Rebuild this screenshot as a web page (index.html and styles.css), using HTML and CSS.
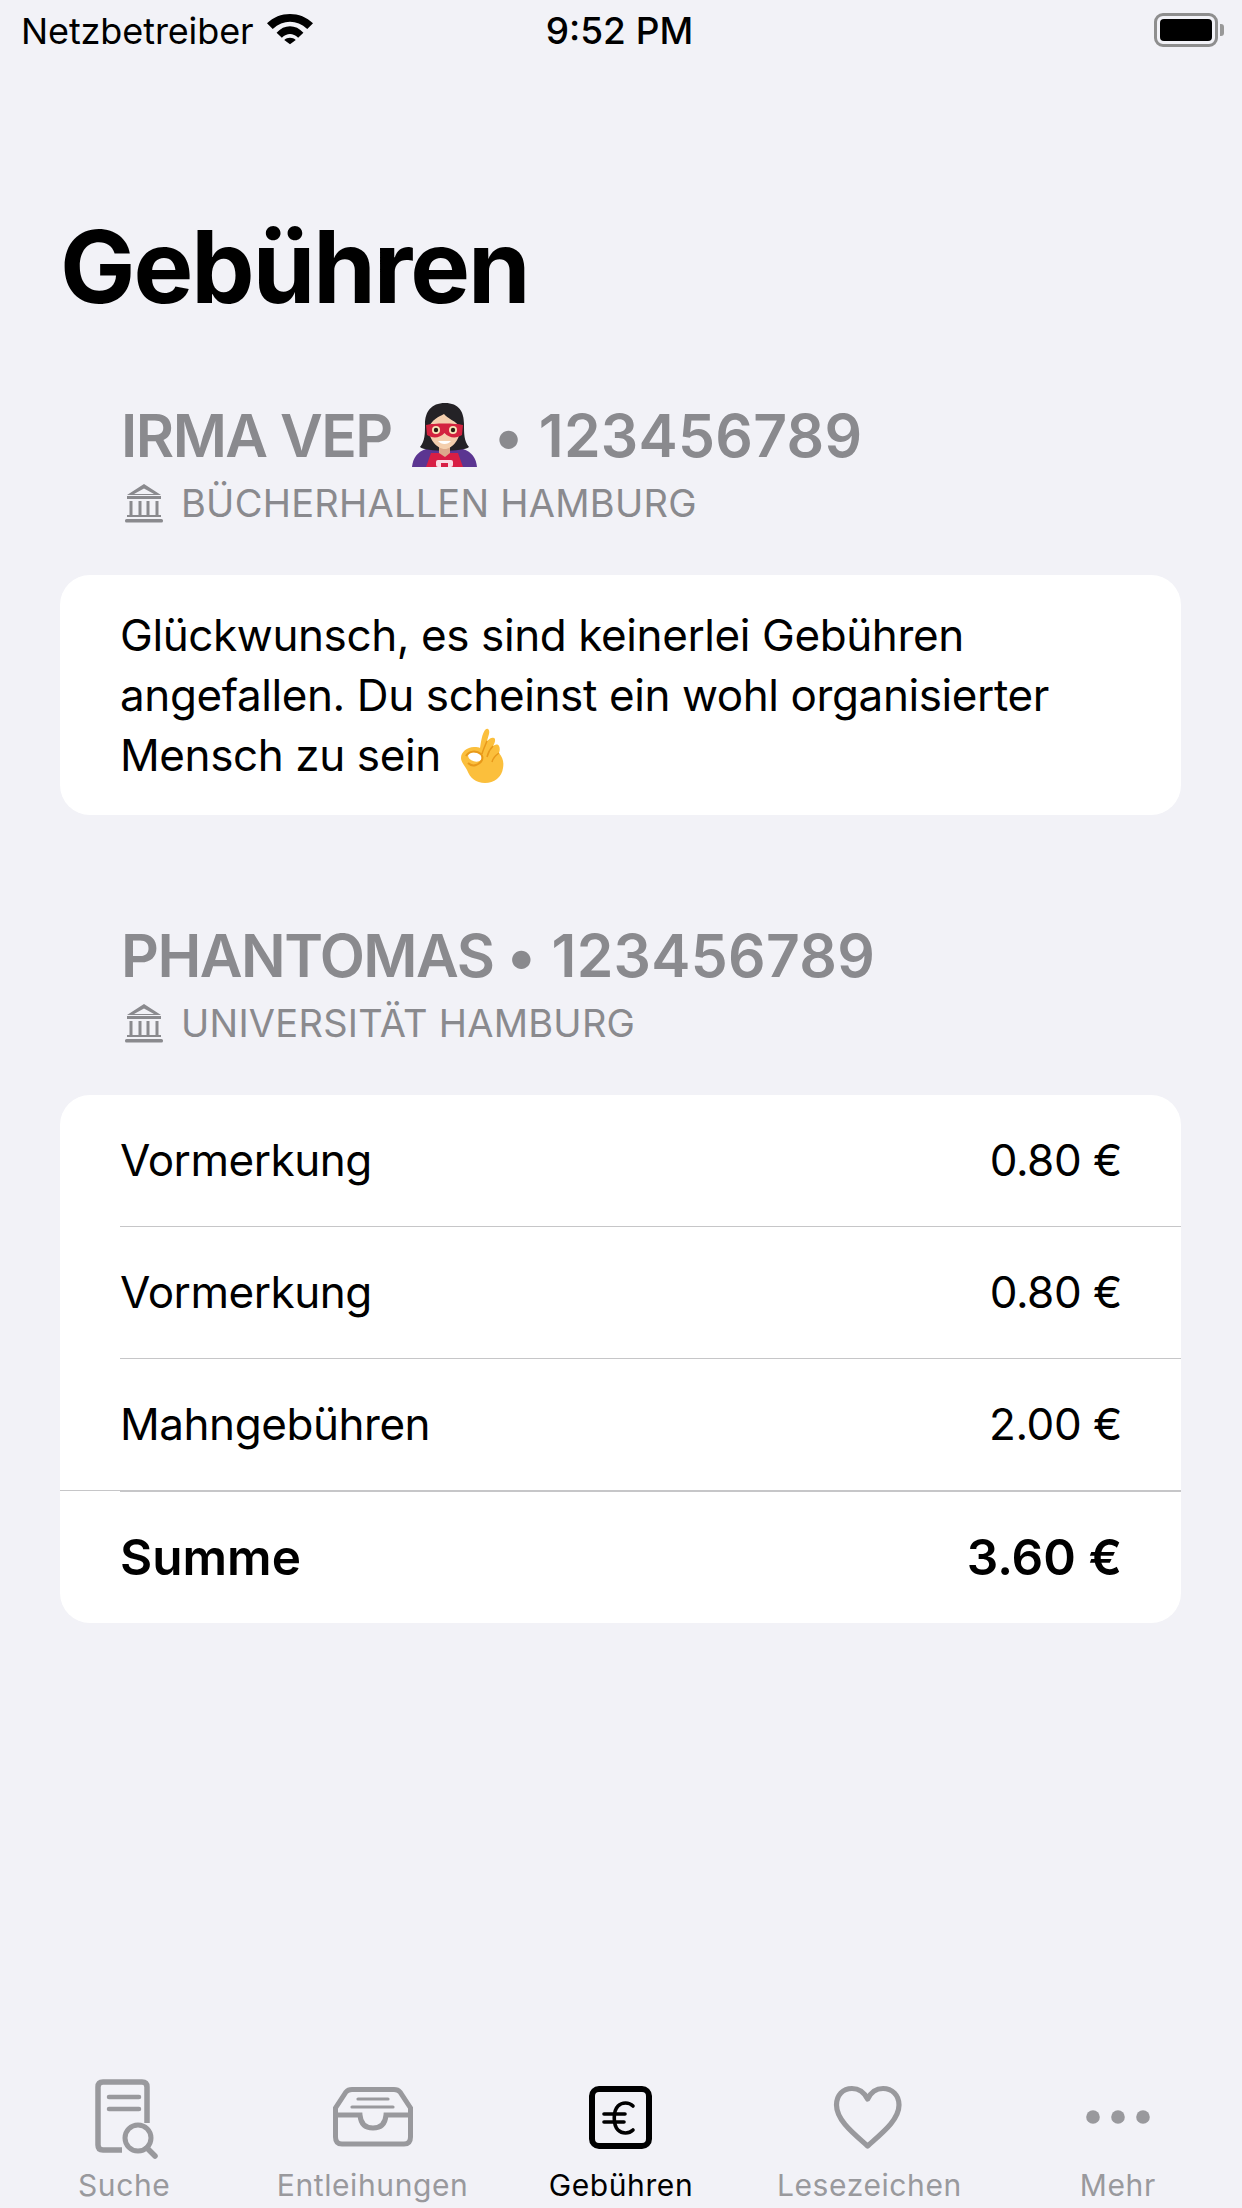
FILE: index.html
```html
<!DOCTYPE html>
<html lang="de">
<head>
  <meta charset="UTF-8">
  <title>Gebühren</title>
  <link rel="stylesheet" href="styles.css">
</head>
<body>
  <div class="screen">
    <div class="status-bar">
      <div class="status-left">
        <span class="carrier">Netzbetreiber</span>
        <svg class="wifi" viewBox="0 0 48 32" width="46" height="32">
          <path d="M0 10 C13 -3 35 -3 48 10 L42 16 C31 6 17 6 6 16 Z" fill="#000"/>
          <path d="M10 20 C18 11 30 11 38 20 L32.500 25 C27 20 21 20 15.500 25 Z" fill="#000"/>
          <path d="M18 27.500 C21 24.500 27 24.500 30 27.500 L24 32 Z" fill="#000"/>
        </svg>
      </div>
      <span class="clock">9:52 PM</span>
      <div class="battery"><div class="battery-level"></div></div>
    </div>

    <h1 class="page-title">Gebühren</h1>

    <section class="account">
      <div class="account-head">
        <div class="account-name">
          <span class="holder">IRMA VEP</span>
          <svg class="emoji-hero" viewBox="0 0 65 64" width="65" height="64">
            <path d="M0 64 C1 55 5 49 14 46 L51 46 C60 49 64 55 65 64 Z" fill="#5b3591"/>
            <path d="M14 64 L19 50 L46 50 L51 64 Z" fill="#d81e44"/>
            <rect x="24" y="57" width="17" height="7" rx="2" fill="#f9dbe2"/>
            <rect x="29" y="60" width="7" height="4" fill="#d81e44"/>
            <path d="M33 0 C19 0 13 9 13 21 C13 31 13 38 8 44 C14 49 51 49 57 44 C52 38 52 31 52 21 C52 9 47 0 33 0 Z" fill="#242226"/>
            <path d="M27 42 L38 42 L38 50 L33 54 L27 50 Z" fill="#dca98a"/>
            <path d="M17 24 C20 17 26 14 32 11 C36 16 44 18 48 24 C49 36 40 46 33 46 C25 46 16 36 17 24 Z" fill="#f4cfae"/>
            <path d="M14 22 C22 20 43 20 51 22 L50 32 C44 36 37 35 32.500 30 C28 35 21 36 15 32 Z" fill="#d3233f"/>
            <circle cx="24" cy="27" r="4" fill="#f6e6b8"/>
            <circle cx="41" cy="27" r="4" fill="#f6e6b8"/>
            <circle cx="24" cy="27" r="2.200" fill="#2b1c14"/>
            <circle cx="41" cy="27" r="2.200" fill="#2b1c14"/>
            <path d="M26 38 C29 42 36 42 39 38 Z" fill="#fff"/>
          </svg>
          <span class="number">• 123456789</span>
        </div>
        <div class="account-lib">
          <svg class="lib-icon" viewBox="0 0 40 42" width="40" height="42"><use href="#bank"/></svg>
          <span>BÜCHERHALLEN HAMBURG</span>
        </div>
      </div>
      <div class="card card-text">
        Glückwunsch, es sind keinerlei Gebühren<br>
        angefallen. Du scheinst ein wohl organisierter<br>
        Mensch zu sein
        <svg class="emoji-ok" viewBox="0 0 43 55" width="43" height="55">
          <path d="M24 2 C27 -1 29 2 28 6 L26 13 C29 10 31 9 33 10 C35 11 34 15 32 18 C35 16 37 16 38 18 C39 20 39 22 38 25 C42 30 43 34 42 40 C41 49 33 55 24 55 C15 55 9 50 6 42 C4 38 0 34 0 30 C0 24 6 19 13 19 C16 19 18 19 19 20 C20 14 21 6 24 2 Z" fill="#fbbf3c"/>
          <ellipse cx="14" cy="29" rx="7" ry="4.500" transform="rotate(15 14 29)" fill="#fff"/>
          <path d="M5 28 C8 23 15 22 20 26 C23 30 21 35 15 37 C12 38 9 37 7 35" fill="none" stroke="#e8991a" stroke-width="2"/>
          <path d="M26 13 C24 18 22 22 21 26 M32 18 C29 21 27 25 26 29 M38 25 C35 27 32 30 31 34" fill="none" stroke="#e8991a" stroke-width="1.500"/>
        </svg>
      </div>
    </section>

    <section class="account">
      <div class="account-head">
        <div class="account-name">
          <span class="holder">PHANTOMAS</span>
          <span class="number">• 123456789</span>
        </div>
        <div class="account-lib">
          <svg class="lib-icon" viewBox="0 0 40 42" width="40" height="42"><use href="#bank"/></svg>
          <span>UNIVERSITÄT HAMBURG</span>
        </div>
      </div>
      <div class="card">
        <div class="fee-row"><span>Vormerkung</span><span>0.80 €</span></div>
        <div class="fee-row"><span>Vormerkung</span><span>0.80 €</span></div>
        <div class="fee-row"><span>Mahngebühren</span><span>2.00 €</span></div>
        <div class="fee-row fee-total"><span>Summe</span><span>3.60 €</span></div>
      </div>
    </section>

    <nav class="tab-bar">
      <div class="tab">
        <svg class="tab-icon" viewBox="0 0 80 84" width="80" height="84">
          <path d="M38 75 H19 Q14 75 14 70 V12 Q14 7 19 7 H58 Q63 7 63 12 V48" fill="none" stroke="currentColor" stroke-width="5.500"/>
          <path d="M25 22 H55 M25 34 H55" stroke="currentColor" stroke-width="4.500" stroke-linecap="round"/>
          <circle cx="54" cy="63" r="13" fill="none" stroke="currentColor" stroke-width="5"/>
          <path d="M63 73 L71 81" stroke="currentColor" stroke-width="5.500" stroke-linecap="round"/>
        </svg>
        <span>Suche</span>
      </div>
      <div class="tab">
        <svg class="tab-icon" viewBox="0 0 80 84" width="80" height="84">
          <path d="M19 14.500 H61 Q65 14.500 67 17 L77.500 33 V62 Q77.500 69 71 69 H9 Q2.500 69 2.500 62 V33 L13 17 Q15 14.500 19 14.500 Z" fill="none" stroke="currentColor" stroke-width="5"/>
          <path d="M3 40 H27 Q28 53 40 53 Q52 53 53 40 H77" fill="none" stroke="currentColor" stroke-width="5"/>
          <path d="M25 24 H55 M19 32 H60" stroke="currentColor" stroke-width="3.200" stroke-linecap="round"/>
        </svg>
        <span>Entleihungen</span>
      </div>
      <div class="tab tab-active">
        <svg class="tab-icon" viewBox="0 0 80 84" width="80" height="84">
          <rect x="11" y="14" width="57" height="57" rx="7" fill="none" stroke="currentColor" stroke-width="6"/>
          <path d="M52 31 C48 27 41 27 37 31 C32 36 32 50 37 55 C41 59 48 59 52 55 M23 39 H44 M23 47 H43" fill="none" stroke="currentColor" stroke-width="3.600" stroke-linecap="round"/>
        </svg>
        <span>Gebühren</span>
      </div>
      <div class="tab">
        <svg class="tab-icon" viewBox="0 0 80 84" width="80" height="84">
          <path d="M38.600 71 C24 58 7.500 45 7.500 30 C7.500 20 14 13.500 23 13.500 C30 13.500 35 17 38.600 24 C42 17 47 13.500 54 13.500 C63 13.500 70 20 70 30 C70 45 53 58 38.600 71 Z" fill="none" stroke="currentColor" stroke-width="5.200" stroke-linejoin="round"/>
        </svg>
        <span>Lesezeichen</span>
      </div>
      <div class="tab">
        <svg class="tab-icon" viewBox="0 0 80 84" width="80" height="84">
          <circle cx="15" cy="42" r="6.800" fill="currentColor"/>
          <circle cx="40" cy="42" r="6.800" fill="currentColor"/>
          <circle cx="65" cy="42" r="6.800" fill="currentColor"/>
        </svg>
        <span>Mehr</span>
      </div>
    </nav>
  </div>

  <svg class="defs" width="0" height="0">
    <symbol id="bank" viewBox="0 0 40 42">
      <path d="M20 2 L37 13 H3 Z M20 6.500 L10 12 H30 Z" fill="currentColor" fill-rule="evenodd"/>
      <rect x="3" y="14" width="34" height="3" fill="currentColor"/>
      <path d="M7 19 V33 M16 19 V33 M24 19 V33 M33 19 V33" stroke="currentColor" stroke-width="3"/>
      <rect x="3" y="33" width="34" height="2" fill="currentColor"/>
      <rect x="1" y="37" width="38" height="3.500" rx="1.500" fill="currentColor"/>
    </symbol>
  </svg>
</body>
</html>
```

FILE: styles.css
```css
:root {
  --bg: #f2f2f7;
  --grey: #8a8a8e;
  --tab-grey: #99999d;
  --line: #c6c6c8;
}

* {
  box-sizing: border-box;
}

body {
  margin: 0;
  background: var(--bg);
  color: #000;
  font-family: Inter, "Liberation Sans", sans-serif;
}

.screen {
  width: 1242px;
  height: 2208px;
  display: flex;
  flex-direction: column;
  overflow: hidden;
}

.defs {
  position: absolute;
}

.status-bar {
  height: 62px;
  padding: 11px 24px 0 21px;
  display: grid;
  grid-template-columns: 1fr auto 1fr;
  align-items: start;
  font-size: 36px;
  line-height: 40px;
}

.status-left {
  display: flex;
  gap: 13px;
}

.carrier {
  letter-spacing: -0.1px;
}

.wifi {
  margin-top: 2px;
}

.clock {
  font-weight: 500;
  font-size: 37px;
}

.battery {
  justify-self: end;
  width: 64px;
  height: 34px;
  margin-top: 2px;
  padding: 3px;
  border: 3px solid #8e8e8e;
  border-radius: 9px;
  position: relative;
}

.battery::after {
  content: "";
  position: absolute;
  right: -9px;
  top: 8px;
  width: 4px;
  height: 12px;
  background: #999;
  border-radius: 0 3px 3px 0;
}

.battery-level {
  height: 100%;
  background: #000;
  border-radius: 4px;
}

.page-title {
  margin: 0;
  padding: 147px 60px 0;
  font-size: 100.5px;
  line-height: 116px;
  font-weight: 700;
  letter-spacing: -2px;
}

.account {
  padding: 0 61px 0 60px;
}

.account-head {
  padding-left: 61px;
  margin-top: 78px;
  color: var(--grey);
}

.account + .account .account-head {
  margin-top: 108px;
}

.account-name {
  display: flex;
  align-items: center;
  gap: 20px;
  height: 64px;
  font-size: 58.8px;
  font-weight: 600;
}

.holder {
  letter-spacing: -1.5px;
}

.holder + .number {
  margin-left: -7px;
}

.number {
  letter-spacing: 0.3px;
}

.emoji-hero {
  flex: none;
}

.emoji-hero + .number {
  margin-left: -3px;
}

.account-lib {
  display: flex;
  align-items: center;
  gap: 17px;
  margin-top: 14px;
  height: 44px;
  font-size: 38px;
  letter-spacing: 0.25px;
}

.lib-icon {
  margin-left: 3px;
  flex: none;
}

.card {
  margin-top: 50px;
  background: #fff;
  border-radius: 30px;
  overflow: hidden;
}

.card-text {
  height: 240px;
  padding: 30px 60px;
  font-size: 44px;
  line-height: 60px;
  letter-spacing: -0.4px;
}

.emoji-ok {
  height: 55px;
  margin: -20px 0 -20px 8px;
  vertical-align: 8px;
}

.fee-row {
  height: 132px;
  margin-left: 60px;
  padding: 0 59px 2px 0;
  display: flex;
  justify-content: space-between;
  align-items: center;
  font-size: 44px;
  letter-spacing: -0.45px;
  border-bottom: 1px solid var(--line);
}

.fee-total {
  height: 131px;
  margin-left: 0;
  padding-left: 60px;
  font-weight: 600;
  font-size: 49.5px;
  letter-spacing: 0;
  border-bottom: 0;
}

.fee-row:nth-child(3) {
  height: 133px;
  border-bottom-width: 2px;
  position: relative;
}

.fee-row:nth-child(3)::after {
  content: "";
  position: absolute;
  left: -60px;
  bottom: -1px;
  width: 60px;
  height: 1px;
  background: var(--line);
}

.tab-bar {
  margin-top: auto;
  height: 133px;
  display: grid;
  grid-template-columns: repeat(5, 1fr);
  color: var(--tab-grey);
}

.tab {
  display: flex;
  flex-direction: column;
  align-items: center;
  font-size: 30px;
  letter-spacing: 0.6px;
}

.tab-icon {
  height: 84px;
  margin-bottom: 7px;
}

.tab span {
  line-height: 38px;
}

.tab-active {
  color: #000;
}
```
